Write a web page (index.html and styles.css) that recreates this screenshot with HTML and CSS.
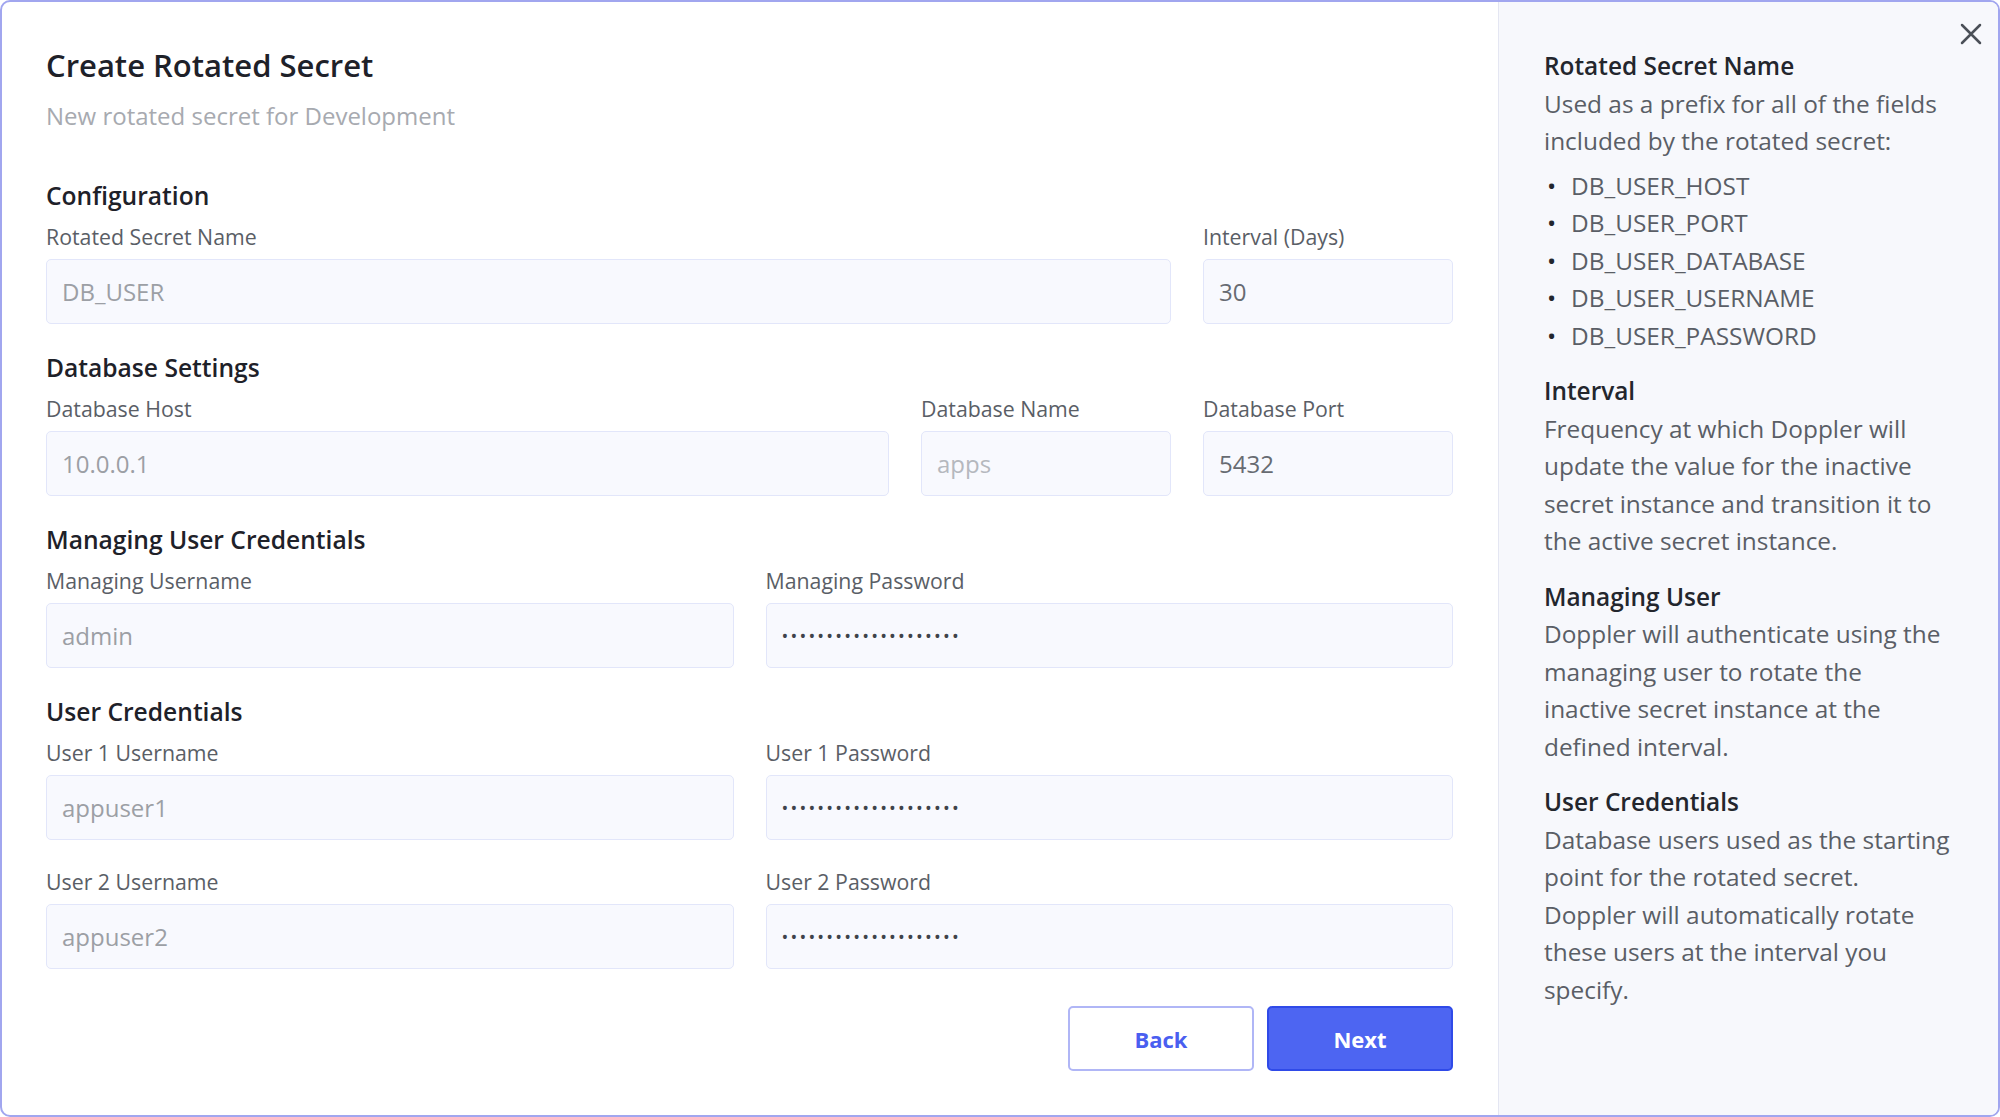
FILE: index.html
```html
<!DOCTYPE html>
<html lang="en">

<head>
    <meta charset="UTF-8">
    <meta name="viewport" content="width=device-width, initial-scale=1.0">
    <title>Create Rotated Secret</title>
    <link rel="stylesheet" href="styles.css">
</head>

<body>
    <div class="modal">
        <form class="main">
            <h1 class="title">Create Rotated Secret</h1>
            <p class="subtitle">New rotated secret for Development</p>

            <section class="group">
                <h2>Configuration</h2>
                <div class="row row-config">
                    <label class="field"><span>Rotated Secret Name</span><input type="text" placeholder="DB_USER"></label>
                    <label class="field"><span>Interval (Days)</span><input type="text" value="30"></label>
                </div>
            </section>

            <section class="group">
                <h2>Database Settings</h2>
                <div class="row row-db">
                    <label class="field"><span>Database Host</span><input type="text" placeholder="10.0.0.1"></label>
                    <label class="field"><span>Database Name</span><input type="text" class="light" placeholder="apps"></label>
                    <label class="field"><span>Database Port</span><input type="text" value="5432"></label>
                </div>
            </section>

            <section class="group">
                <h2>Managing User Credentials</h2>
                <div class="row row-half">
                    <label class="field"><span>Managing Username</span><input type="text" placeholder="admin"></label>
                    <label class="field"><span>Managing Password</span><input type="password" value="secretsecretsecret12"></label>
                </div>
            </section>

            <section class="group">
                <h2>User Credentials</h2>
                <div class="row row-half">
                    <label class="field"><span>User 1 Username</span><input type="text" placeholder="appuser1"></label>
                    <label class="field"><span>User 1 Password</span><input type="password" value="secretsecretsecret12"></label>
                </div>
                <div class="row row-half">
                    <label class="field"><span>User 2 Username</span><input type="text" placeholder="appuser2"></label>
                    <label class="field"><span>User 2 Password</span><input type="password" value="secretsecretsecret12"></label>
                </div>
            </section>

            <div class="actions">
                <button type="button" class="btn btn-back">Back</button>
                <button type="button" class="btn btn-next">Next</button>
            </div>
        </form>

        <aside class="help">
            <button type="button" class="close" aria-label="Close">
                <svg width="24" height="24" viewBox="0 0 24 24" fill="none" stroke="#4b5058" stroke-width="2.5" stroke-linecap="round">
                    <path d="M3 3 L21 21 M21 3 L3 21" />
                </svg>
            </button>

            <div class="help-block">
                <h3>Rotated Secret Name</h3>
                <p>Used as a prefix for all of the fields included by the rotated secret:</p>
                <ul>
                    <li>DB_USER_HOST</li>
                    <li>DB_USER_PORT</li>
                    <li>DB_USER_DATABASE</li>
                    <li>DB_USER_USERNAME</li>
                    <li>DB_USER_PASSWORD</li>
                </ul>
            </div>

            <div class="help-block">
                <h3>Interval</h3>
                <p>Frequency at which Doppler will update the value for the inactive secret instance and transition it to the active secret instance.</p>
            </div>

            <div class="help-block">
                <h3>Managing User</h3>
                <p>Doppler will authenticate using the managing user to rotate the inactive secret instance at the defined interval.</p>
            </div>

            <div class="help-block">
                <h3>User Credentials</h3>
                <p>Database users used as the starting point for the rotated secret. Doppler will automatically rotate these users at the interval you specify.</p>
            </div>
        </aside>
    </div>
</body>

</html>
```

FILE: styles.css
```css
* {
    margin: 0;
    padding: 0;
    box-sizing: border-box;
}

body {
    background-color: #fff;
    font-family: "Open Sans", "Noto Sans", sans-serif;
    color: #23262d;
}

.modal {
    width: 2000px;
    height: 1117px;
    display: grid;
    grid-template-columns: 1fr 500px;
    border: 2px solid #a1a6ef;
    border-radius: 10px;
    overflow: hidden;
    background-color: #fff;
}

/* left side - form */

.main {
    padding: 45px 45px 0 44px;
}

.title {
    font-size: 31px;
    line-height: 36px;
    font-weight: 600;
    color: #1e2129;
}

.subtitle {
    margin-top: 19px;
    font-size: 24px;
    line-height: 28px;
    font-weight: 400;
    color: #a7aab0;
}

.group {
    display: flex;
    flex-direction: column;
    gap: 30px;
    margin-top: 30px;
}

.subtitle + .group {
    margin-top: 52px;
}

.group h2 {
    font-size: 24.6px;
    line-height: 28px;
    font-weight: 600;
    color: #1e2129;
    margin-bottom: -15px;
}

.row {
    display: grid;
    gap: 32px;
}

.row-config {
    grid-template-columns: 1fr 250px;
}

.row-db {
    grid-template-columns: 1fr 250px 250px;
}

.row-half {
    grid-template-columns: 1fr 1fr;
}

.field {
    display: flex;
    flex-direction: column;
    gap: 10px;
}

.field span {
    font-size: 21.3px;
    line-height: 24px;
    color: #5a5e66;
}

.field input {
    height: 65px;
    padding: 0 15px;
    border: 1px solid #e2e6fa;
    border-radius: 5px;
    background-color: #f8f9fe;
    font-family: inherit;
    font-size: 24px;
    color: #676b72;
    outline: none;
}

.field input::placeholder {
    color: #9c9fa5;
}

.field input.light::placeholder {
    color: #b5b8be;
}

.field input[type="password"] {
    font-size: 18px;
    letter-spacing: 2.2px;
    color: #3f434a;
}

.actions {
    display: flex;
    justify-content: flex-end;
    gap: 13px;
    margin-top: 37px;
}

.btn {
    width: 186px;
    height: 65px;
    border-radius: 5px;
    font-family: inherit;
    font-size: 22px;
    font-weight: 700;
    cursor: pointer;
}

.btn-back {
    background-color: #fff;
    border: 2px solid #b0b6f6;
    color: #4a5ef0;
}

.btn-next {
    background-color: #4d65f2;
    border: 2px solid #2f4ae8;
    color: #fff;
}

/* right side - help */

.help {
    position: relative;
    background-color: #f7f8fc;
    border-left: 1px solid #e4e6f2;
    padding: 45px 30px 0 45px;
    display: flex;
    flex-direction: column;
    gap: 18px;
}

.close {
    position: absolute;
    top: 20px;
    right: 15px;
    width: 24px;
    height: 24px;
    border: 0;
    background-color: transparent;
    cursor: pointer;
}

.help-block {
    width: 408px;
    font-size: 24.4px;
    line-height: 37.5px;
    color: #5a5e66;
}

.help-block h3 {
    font-size: 24.4px;
    font-weight: 600;
    color: #23262d;
}

.help-block ul {
    list-style: none;
    margin-top: 7px;
}

.help-block li {
    display: flex;
}

.help-block li::before {
    content: "•";
    width: 24px;
    padding-left: 3px;
    color: #23262d;
}
```
